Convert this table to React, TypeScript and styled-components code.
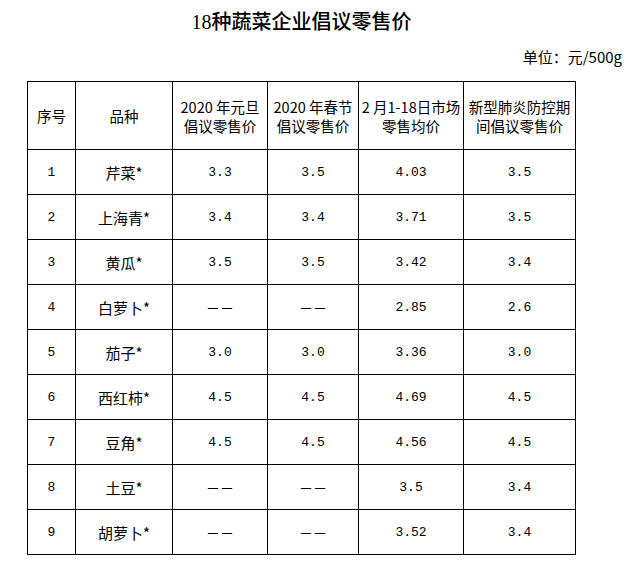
import React from 'react';
import styled, { createGlobalStyle } from 'styled-components';

const GlobalStyle = createGlobalStyle`
  html, body {
    margin: 0;
    padding: 0;
    background: #fff;
  }
  body {
    font-family: 'Noto Sans CJK SC', 'Liberation Sans', sans-serif;
    color: #000;
  }
`;

interface Row {
  no: number;
  name: string;
  newYear: string;
  spring: string;
  market: string;
  epidemic: string;
}

const rows: Row[] = [
  { no: 1, name: '芹菜*', newYear: '3.3', spring: '3.5', market: '4.03', epidemic: '3.5' },
  { no: 2, name: '上海青*', newYear: '3.4', spring: '3.4', market: '3.71', epidemic: '3.5' },
  { no: 3, name: '黄瓜*', newYear: '3.5', spring: '3.5', market: '3.42', epidemic: '3.4' },
  { no: 4, name: '白萝卜*', newYear: '', spring: '', market: '2.85', epidemic: '2.6' },
  { no: 5, name: '茄子*', newYear: '3.0', spring: '3.0', market: '3.36', epidemic: '3.0' },
  { no: 6, name: '西红柿*', newYear: '4.5', spring: '4.5', market: '4.69', epidemic: '4.5' },
  { no: 7, name: '豆角*', newYear: '4.5', spring: '4.5', market: '4.56', epidemic: '4.5' },
  { no: 8, name: '土豆*', newYear: '', spring: '', market: '3.5', epidemic: '3.4' },
  { no: 9, name: '胡萝卜*', newYear: '', spring: '', market: '3.52', epidemic: '3.4' },
];

// column widths measured off the grid lines
const colWidths = [48, 97, 95, 91, 105, 112];

const Page = styled.div`
  width: 628px;
  height: 562px;
  box-sizing: border-box;
  padding-top: 9px;
`;

const Title = styled.h1`
  margin: 0 0 0 27px;
  width: 549px;
  text-align: center;
  font-size: 20px;
  line-height: 26px;
  font-weight: 500;
  color: #000;
  font-family: 'Liberation Serif', 'Noto Sans CJK SC', serif;
`;

const Unit = styled.div`
  margin-top: 11px;
  padding-right: 6px;
  text-align: right;
  font-size: 15px;
  line-height: 21px;
`;

const Table = styled.table`
  margin: 14px 0 0 27px;
  width: 549px;
  table-layout: fixed;
  border-collapse: collapse;
  border: 1px solid #000;
`;

const HeadCell = styled.th`
  height: 67px;
  padding: 0;
  border: 1px solid #000;
  font-weight: 400;
  font-size: 14.5px;
  line-height: 19px;
  white-space: nowrap;
  text-align: center;
  vertical-align: middle;
`;

const Cell = styled.td<{ $mono?: boolean }>`
  height: 44px;
  padding: 0;
  border: 1px solid #000;
  text-align: center;
  vertical-align: middle;
  white-space: nowrap;
  font-size: ${p => (p.$mono ? '13px' : '15px')};
  font-family: ${p =>
    p.$mono
      ? "'Liberation Mono', 'Noto Sans CJK SC', monospace"
      : "'Noto Sans CJK SC', sans-serif"};
`;

const Dash = styled.span`
  font-family: 'Noto Sans CJK SC', sans-serif;
  font-size: 14px;
`;

const Value = ({ v }: { v: string }) =>
  v ? <>{v}</> : <Dash>－－</Dash>;

export default function App() {
  return (
    <Page>
      <GlobalStyle />
      <Title>18种蔬菜企业倡议零售价</Title>
      <Unit>单位：元/500g</Unit>
      <Table>
        <colgroup>
          {colWidths.map((w, i) => (
            <col key={i} style={{ width: w }} />
          ))}
        </colgroup>
        <thead>
          <tr>
            <HeadCell>序号</HeadCell>
            <HeadCell>品种</HeadCell>
            <HeadCell>
              2020 年元旦
              <br />
              倡议零售价
            </HeadCell>
            <HeadCell>
              2020 年春节
              <br />
              倡议零售价
            </HeadCell>
            <HeadCell>
              2 月1-18日市场
              <br />
              零售均价
            </HeadCell>
            <HeadCell>
              新型肺炎防控期
              <br />
              间倡议零售价
            </HeadCell>
          </tr>
        </thead>
        <tbody>
          {rows.map(r => (
            <tr key={r.no}>
              <Cell $mono>{r.no}</Cell>
              <Cell>{r.name}</Cell>
              <Cell $mono><Value v={r.newYear} /></Cell>
              <Cell $mono><Value v={r.spring} /></Cell>
              <Cell $mono>{r.market}</Cell>
              <Cell $mono>{r.epidemic}</Cell>
            </tr>
          ))}
        </tbody>
      </Table>
    </Page>
  );
}
